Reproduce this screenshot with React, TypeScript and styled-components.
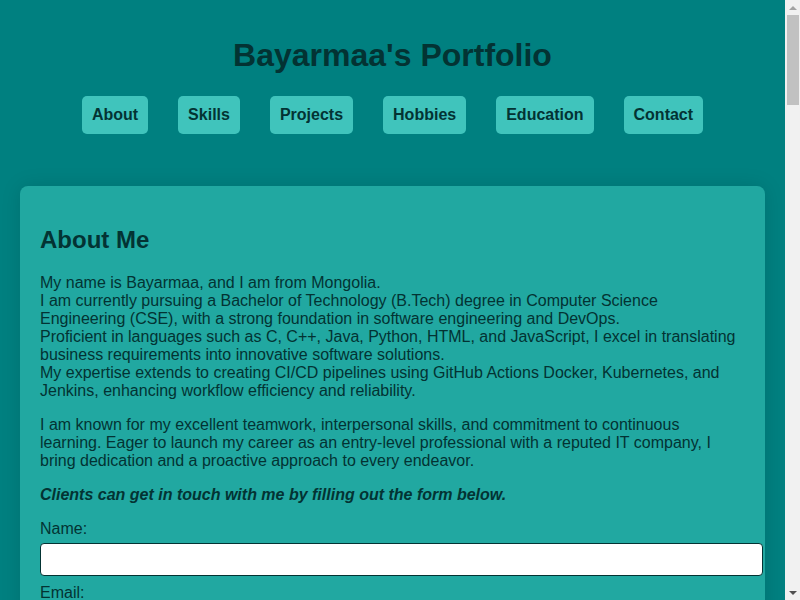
import React from "react";
import styled, { createGlobalStyle } from "styled-components";

const Global = createGlobalStyle`
  html { scrollbar-width: none; }
  html::-webkit-scrollbar { display: none; }
  html, body { margin: 0; padding: 0; }
  body {
    background: #008080;
    color: #033333;
    font-family: "Liberation Sans", Arial, sans-serif;
    font-size: 16px;
  }
`;

const Page = styled.div`
  margin-right: 15px;
`;

const Header = styled.header`
  padding: 16px 0 32px;
  text-align: center;
`;

const Title = styled.h1`
  margin: 21px 0 22px;
  font-size: 32px;
  font-weight: bold;
  line-height: 37px;
`;

const Nav = styled.nav`
  display: flex;
  justify-content: center;
  gap: 30px;
`;

const NavButton = styled.a`
  display: block;
  padding: 10px;
  background: #40c4bc;
  border-radius: 5px;
  color: #033333;
  font-weight: bold;
  font-size: 16px;
  line-height: 18px;
  text-decoration: none;
`;

const Main = styled.main`
  display: flex;
  flex-direction: column;
  gap: 40px;
  padding: 20px 20px 40px;
`;

const Section = styled.section`
  background: #21a8a1;
  border-radius: 8px;
  padding: 20px;
  box-shadow: 0 0 20px rgba(0, 0, 0, 0.12);
`;

const Heading = styled.h2`
  margin: 20px 0 20px;
  font-size: 24px;
  line-height: 28px;
`;

const Para = styled.p<{ $emph?: boolean }>`
  margin: 0 0 16px;
  line-height: 18px;
  font-weight: ${(p) => (p.$emph ? "bold" : "normal")};
  font-style: ${(p) => (p.$emph ? "italic" : "normal")};
`;

const Form = styled.form`
  display: flex;
  flex-direction: column;
  align-items: flex-start;
`;

const Label = styled.label`
  display: block;
  line-height: 18px;
`;

const Input = styled.input`
  width: 100%;
  box-sizing: content-box;
  padding: 8px;
  margin: 5px 0 8px;
  border: 1px solid #033333;
  border-radius: 4px;
  background: #fff;
  font-family: "Liberation Sans", Arial, sans-serif;
  font-size: 13px;
  line-height: 15px;
`;

const TextArea = styled.textarea`
  width: 100%;
  box-sizing: content-box;
  height: 100px;
  padding: 8px;
  margin: 5px 0 8px;
  border: 1px solid #033333;
  border-radius: 4px;
  background: #fff;
  font-family: "Liberation Sans", Arial, sans-serif;
`;

const Submit = styled.button`
  padding: 10px 16px;
  background: #40c4bc;
  color: #033333;
  border: none;
  border-radius: 5px;
  font-weight: bold;
  font-size: 16px;
  font-family: "Liberation Sans", Arial, sans-serif;
`;

const List = styled.ul`
  margin: 0 0 16px;
  padding-left: 40px;
  line-height: 24px;
`;

const Footer = styled.footer`
  text-align: center;
  padding: 20px;
`;

/* Fake classic scrollbar overlay */
const ScrollTrack = styled.div`
  position: fixed;
  top: 0;
  right: 0;
  width: 15px;
  height: 100vh;
  background: #f1f1f1;
  display: flex;
  flex-direction: column;
  align-items: center;
`;

const Arrow = styled.div<{ $down?: boolean }>`
  width: 15px;
  height: 15px;
  flex: none;
  display: flex;
  align-items: center;
  justify-content: center;
  &::before {
    content: "";
    width: 0;
    height: 0;
    border-left: 4px solid transparent;
    border-right: 4px solid transparent;
    ${(p) =>
      p.$down
        ? "border-top: 4px solid #505050;"
        : "border-bottom: 4px solid #a3a3a3;"}
  }
`;

const Gutter = styled.div`
  flex: 1;
  align-self: stretch;
  padding: 0 1px 0 2px;
`;

const Thumb = styled.div`
  height: 90px;
  background: #c1c1c1;
`;

const navItems = ["About", "Skills", "Projects", "Hobbies", "Education", "Contact"];

const otherSections: { title: string; items: string[] }[] = [
  {
    title: "Skills",
    items: [
      "Programming: C, C++, Java, Python, JavaScript",
      "Web: HTML, CSS, React",
      "DevOps: Docker, Kubernetes, Jenkins, GitHub Actions",
      "Cloud: AWS, Azure basics",
      "Version control: Git, GitHub",
      "Databases: MySQL, MongoDB",
    ],
  },
  {
    title: "Projects",
    items: [
      "CI/CD pipeline for a web application using Jenkins and Docker",
      "Kubernetes deployment of a microservices demo",
      "Personal portfolio website",
      "Student management system in Java",
      "Weather application using JavaScript and APIs",
    ],
  },
  {
    title: "Hobbies",
    items: ["Reading", "Traveling", "Photography", "Playing chess", "Hiking"],
  },
  {
    title: "Education",
    items: [
      "Bachelor of Technology (B.Tech) in Computer Science Engineering",
      "Higher Secondary Education, Mongolia",
      "Secondary Education, Mongolia",
    ],
  },
];

export default function App() {
  return (
    <>
      <Global />
      <Page>
        <Header>
          <Title>Bayarmaa's Portfolio</Title>
          <Nav>
            {navItems.map((n) => (
              <NavButton key={n} href={`#${n.toLowerCase()}`}>
                {n}
              </NavButton>
            ))}
          </Nav>
        </Header>
        <Main>
          <Section id="about">
            <Heading>About Me</Heading>
            <Para>
              My name is Bayarmaa, and I am from Mongolia.
              <br />
              I am currently pursuing a Bachelor of Technology (B.Tech) degree in Computer Science
              Engineering (CSE), with a strong foundation in software engineering and DevOps.
              <br />
              Proficient in languages such as C, C++, Java, Python, HTML, and JavaScript, I excel in
              translating business requirements into innovative software solutions.
              <br />
              My expertise extends to creating CI/CD pipelines using GitHub Actions Docker,
              Kubernetes, and Jenkins, enhancing workflow efficiency and reliability.
            </Para>
            <Para>
              I am known for my excellent teamwork, interpersonal skills, and commitment to
              continuous learning. Eager to launch my career as an entry-level professional with a
              reputed IT company, I bring dedication and a proactive approach to every endeavor.
            </Para>
            <Para $emph>Clients can get in touch with me by filling out the form below.</Para>
            <Form onSubmit={(e) => e.preventDefault()}>
              <Label htmlFor="name">Name:</Label>
              <Input id="name" type="text" />
              <Label htmlFor="email">Email:</Label>
              <Input id="email" type="email" />
              <Label htmlFor="phone">Phone:</Label>
              <Input id="phone" type="tel" />
              <Label htmlFor="message">Message:</Label>
              <TextArea id="message" />
              <Submit type="submit">Submit</Submit>
            </Form>
          </Section>
          {otherSections.map((s) => (
            <Section key={s.title} id={s.title.toLowerCase()}>
              <Heading>{s.title}</Heading>
              <List>
                {s.items.map((i) => (
                  <li key={i}>{i}</li>
                ))}
              </List>
              <Para>
                Lorem ipsum dolor sit amet, consectetur adipiscing elit, sed do eiusmod tempor
                incididunt ut labore et dolore magna aliqua. Ut enim ad minim veniam, quis nostrud
                exercitation ullamco laboris nisi ut aliquip ex ea commodo consequat.
              </Para>
              <Para>
                Duis aute irure dolor in reprehenderit in voluptate velit esse cillum dolore eu
                fugiat nulla pariatur. Excepteur sint occaecat cupidatat non proident, sunt in culpa
                qui officia deserunt mollit anim id est laborum.
              </Para>
            </Section>
          ))}
          <Section id="contact">
            <Heading>Contact</Heading>
            <Para>Email: bayarmaa@example.com</Para>
            <Para>Phone: +976 0000 0000</Para>
            <Para>Location: Ulaanbaatar, Mongolia</Para>
          </Section>
        </Main>
        <Footer>© 2024 Bayarmaa. All rights reserved.</Footer>
      </Page>
      <ScrollTrack aria-hidden="true">
        <Arrow />
        <Gutter>
          <Thumb />
        </Gutter>
        <Arrow $down />
      </ScrollTrack>
    </>
  );
}
